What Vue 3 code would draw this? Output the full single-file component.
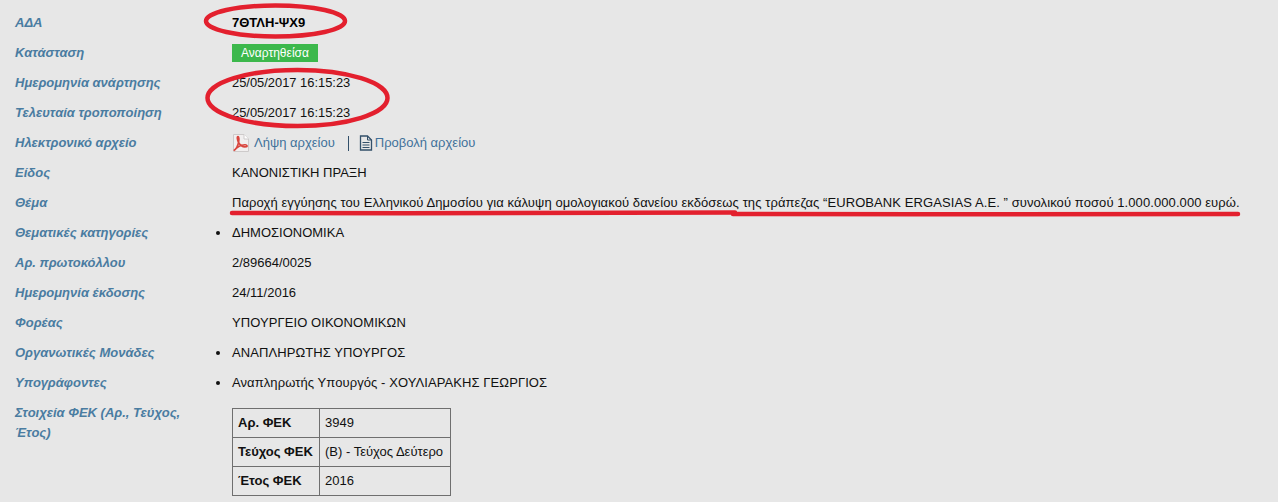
<script setup>
const rowsBefore = [
  { label: 'Είδος', text: 'ΚΑΝΟΝΙΣΤΙΚΗ ΠΡΑΞΗ' },
  { label: 'Θέμα', text: 'Παροχή εγγύησης του Ελληνικού Δημοσίου για κάλυψη ομολογιακού δανείου εκδόσεως της τράπεζας “EUROBANK ERGASIAS A.E. ” συνολικού ποσού 1.000.000.000 ευρώ.', wide: true },
  { label: 'Θεματικές κατηγορίες', text: 'ΔΗΜΟΣΙΟΝΟΜΙΚΑ', bullet: true },
  { label: 'Αρ. πρωτοκόλλου', text: '2/89664/0025' },
  { label: 'Ημερομηνία έκδοσης', text: '24/11/2016' },
  { label: 'Φορέας', text: 'ΥΠΟΥΡΓΕΙΟ ΟΙΚΟΝΟΜΙΚΩΝ', wide: true },
  { label: 'Οργανωτικές Μονάδες', text: 'ΑΝΑΠΛΗΡΩΤΗΣ ΥΠΟΥΡΓΟΣ', bullet: true, wide: true },
  { label: 'Υπογράφοντες', text: 'Αναπληρωτής Υπουργός - ΧΟΥΛΙΑΡΑΚΗΣ ΓΕΩΡΓΙΟΣ', bullet: true, wide: true },
]
const fek = [
  ['Αρ. ΦΕΚ', '3949'],
  ['Τεύχος ΦΕΚ', '(Β) - Τεύχος Δεύτερο'],
  ['Έτος ΦΕΚ', '2016'],
]
</script>

<template>
  <div class="page">
    <div class="row">
      <div class="label">ΑΔΑ</div>
      <div class="value ada">7ΘΤΛΗ-ΨΧ9</div>
    </div>
    <div class="row">
      <div class="label">Κατάσταση</div>
      <div class="value"><span class="badge">Αναρτηθείσα</span></div>
    </div>
    <div class="row">
      <div class="label">Ημερομηνία ανάρτησης</div>
      <div class="value date">25/05/2017 16:15:23</div>
    </div>
    <div class="row">
      <div class="label">Τελευταία τροποποίηση</div>
      <div class="value date">25/05/2017 16:15:23</div>
    </div>
    <div class="row">
      <div class="label">Ηλεκτρονικό αρχείο</div>
      <div class="value files">
        <svg class="pdf" width="18" height="18" viewBox="0 0 18 18">
          <path d="M1.500 .5h10.500l4.500 4.500v12.500h-15z" fill="#f1efef" stroke="#cdcaca" />
          <path d="M12 .5v4.500h4.500" fill="#fff" stroke="#cdcaca" />
          <path d="M1.800 16.500c2.400-1.200 4.300-5.500 5-9.500.3-2 .1-4.500-.8-4.500-1.100 0-.9 3.200.6 6 1.600 2.900 4.300 4.700 7.400 4.300 1.800-.3 1.300-2-.8-2.100-3.800-.2-8.100 2.300-11.400 5.800z" fill="none" stroke="#d9453d" stroke-width="1.600" />
        </svg>
        <a class="link">Λήψη αρχείου</a>
        <span class="sep"></span>
        <svg class="doc" width="14" height="16" viewBox="0 0 14 16">
          <path d="M1.500 1h7l4 4v10h-11z" fill="none" stroke="#33506a" stroke-width="1.300" />
          <path d="M8.500 1v4h4M3.500 7.500h7M3.500 10h7M3.500 12.500h7" fill="none" stroke="#33506a" />
        </svg>
        <a class="link">Προβολή αρχείου</a>
      </div>
    </div>
    <div v-for="r in rowsBefore" :key="r.label" class="row">
      <div class="label">{{ r.label }}</div>
      <div class="value" :class="{ bullet: r.bullet, wide: r.wide }">{{ r.text }}</div>
    </div>
    <div class="row">
      <div class="label">Στοιχεία ΦΕΚ (Αρ., Τεύχος, Έτος)</div>
      <div class="value">
        <table class="fek">
          <tbody>
            <tr v-for="f in fek" :key="f[0]">
              <th>{{ f[0] }}</th>
              <td>{{ f[1] }}</td>
            </tr>
          </tbody>
        </table>
      </div>
    </div>

    <svg class="marks" width="1278" height="502" viewBox="0 0 1278 502">
      <ellipse cx="275.500" cy="21" rx="69.500" ry="15.500" />
      <ellipse cx="297.500" cy="98" rx="90" ry="28" />
      <path d="M232 213C400 213.500 600 213.500 735 212.500" />
      <path d="M733 214C900 214.500 1100 214.500 1238 214" />
    </svg>
  </div>
</template>

<style>
html, body { margin: 0; background: #e7e7e7; }
</style>

<style scoped>
.page {
  position: relative;
  width: 1278px;
  height: 502px;
  overflow: hidden;
  box-sizing: border-box;
  padding: 8px 0 0 15px;
  background: #e7e7e7;
  font-family: "Liberation Sans", Arial, sans-serif;
  font-size: 13px;
  line-height: 20px;
  color: #111;
}
.row {
  display: grid;
  grid-template-columns: 217px 1fr;
  padding: 5px 0;
}
.label {
  font-weight: bold;
  font-style: italic;
  color: #4a7ca1;
  padding-right: 30px;
}
.value { position: relative; white-space: nowrap; }
.wide { letter-spacing: .085px; }
.date { font-size: 12.900px; }
.ada { font-weight: bold; color: #000; }
.badge {
  display: block;
  width: 86px;
  height: 18px;
  margin-top: 1px;
  background: #3cb84c;
  color: #fff;
  font-size: 12px;
  line-height: 18px;
  text-align: center;
}
.files { display: flex; align-items: center; gap: 4px; }
.link { color: #41719a; }
.pdf { flex: none; }
.sep {
  width: 1px;
  height: 15px;
  margin: 0 6px 0 9px;
  background: #33506a;
}
.doc { flex: none; margin-right: -2px; }
.bullet::before {
  content: "";
  position: absolute;
  left: -16px;
  top: 8px;
  width: 4px;
  height: 4px;
  border-radius: 50%;
  background: #111;
}
.fek {
  border-collapse: collapse;
  margin-top: 5px;
  width: 219px;
}
.fek th, .fek td {
  border: 1px solid #6f6f6f;
  height: 28px;
  padding: 0 5px;
  text-align: left;
}
.fek th { width: 76px; font-weight: bold; color: #111; }
.marks {
  position: absolute;
  left: 0;
  top: 0;
  pointer-events: none;
}
.marks ellipse, .marks path {
  fill: none;
  stroke: #e3202e;
  stroke-width: 4.500;
  stroke-linecap: round;
}
</style>
